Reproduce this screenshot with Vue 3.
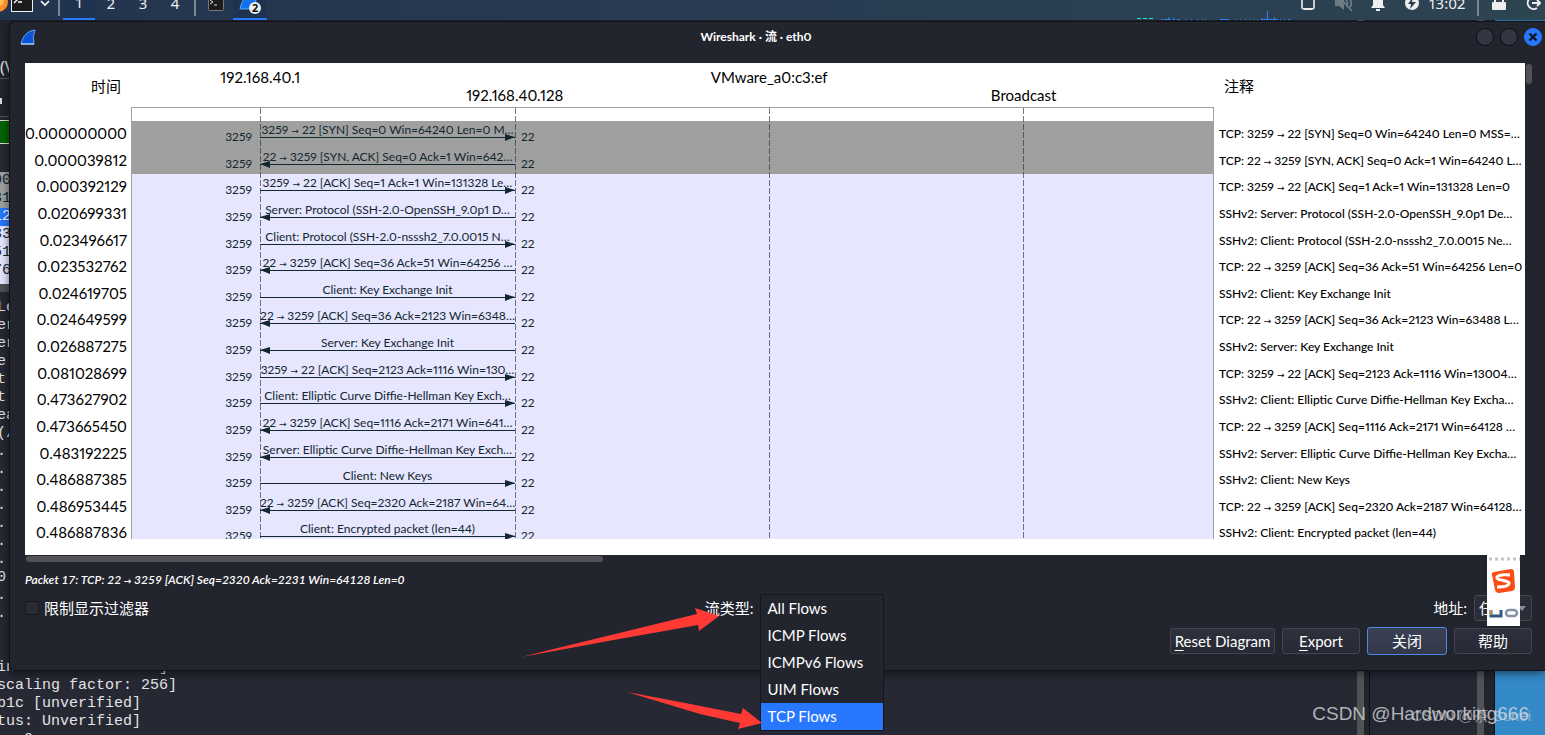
<script setup>
import { ref } from 'vue'

const flowType = ref('TCP Flows')
const flowTypes = ['All Flows', 'ICMP Flows', 'ICMPv6 Flows', 'UIM Flows', 'TCP Flows']
const address = ref('任意')
const limit = ref(false)

const packets = [
  { time: '0.000000000', dir: 'out', label: '3259 → 22 [SYN] Seq=0 Win=64240 Len=0 M…', note: 'TCP: 3259 → 22 [SYN] Seq=0 Win=64240 Len=0 MSS=…', dark: true },
  { time: '0.000039812', dir: 'in', label: '22 → 3259 [SYN, ACK] Seq=0 Ack=1 Win=642…', note: 'TCP: 22 → 3259 [SYN, ACK] Seq=0 Ack=1 Win=64240 L…', dark: true },
  { time: '0.000392129', dir: 'out', label: '3259 → 22 [ACK] Seq=1 Ack=1 Win=131328 Le…', note: 'TCP: 3259 → 22 [ACK] Seq=1 Ack=1 Win=131328 Len=0' },
  { time: '0.020699331', dir: 'in', label: 'Server: Protocol (SSH-2.0-OpenSSH_9.0p1 D…', note: 'SSHv2: Server: Protocol (SSH-2.0-OpenSSH_9.0p1 De…' },
  { time: '0.023496617', dir: 'out', label: 'Client: Protocol (SSH-2.0-nsssh2_7.0.0015 N…', note: 'SSHv2: Client: Protocol (SSH-2.0-nsssh2_7.0.0015 Ne…' },
  { time: '0.023532762', dir: 'in', label: '22 → 3259 [ACK] Seq=36 Ack=51 Win=64256 …', note: 'TCP: 22 → 3259 [ACK] Seq=36 Ack=51 Win=64256 Len=0' },
  { time: '0.024619705', dir: 'out', label: 'Client: Key Exchange Init', note: 'SSHv2: Client: Key Exchange Init' },
  { time: '0.024649599', dir: 'in', label: '22 → 3259 [ACK] Seq=36 Ack=2123 Win=6348…', note: 'TCP: 22 → 3259 [ACK] Seq=36 Ack=2123 Win=63488 L…' },
  { time: '0.026887275', dir: 'in', label: 'Server: Key Exchange Init', note: 'SSHv2: Server: Key Exchange Init' },
  { time: '0.081028699', dir: 'out', label: '3259 → 22 [ACK] Seq=2123 Ack=1116 Win=130…', note: 'TCP: 3259 → 22 [ACK] Seq=2123 Ack=1116 Win=13004…' },
  { time: '0.473627902', dir: 'out', label: 'Client: Elliptic Curve Diffie-Hellman Key Exch…', note: 'SSHv2: Client: Elliptic Curve Diffie-Hellman Key Excha…' },
  { time: '0.473665450', dir: 'in', label: '22 → 3259 [ACK] Seq=1116 Ack=2171 Win=641…', note: 'TCP: 22 → 3259 [ACK] Seq=1116 Ack=2171 Win=64128 …' },
  { time: '0.483192225', dir: 'in', label: 'Server: Elliptic Curve Diffie-Hellman Key Exch…', note: 'SSHv2: Server: Elliptic Curve Diffie-Hellman Key Excha…' },
  { time: '0.486887385', dir: 'out', label: 'Client: New Keys', note: 'SSHv2: Client: New Keys' },
  { time: '0.486953445', dir: 'in', label: '22 → 3259 [ACK] Seq=2320 Ack=2187 Win=64…', note: 'TCP: 22 → 3259 [ACK] Seq=2320 Ack=2187 Win=64128…' },
  { time: '0.486887836', dir: 'out', label: 'Client: Encrypted packet (len=44)', note: 'SSHv2: Client: Encrypted packet (len=44)' }
]

const detailLines = [
  'Le', 'er', 'er', 'e', 't', 't', 'ea', '(/', '.', '.', '.', '.', '.', '.', '.', '0', '.', '.', '', '',
  'in                ]', 'scaling factor: 256]', 'b1c [unverified]', 'tus: Unverified]', '   0'
].join('\n')
</script>

<template>
  <div class="desktop">
    <section class="backdrop" aria-hidden="true">
      <div class="main-window">
        <div class="menu-strip">(V</div>
        <div class="tool-strip"><i></i></div>
        <div class="filter-strip"></div>
        <div class="head-strip"></div>
        <div class="list-row grey">00</div>
        <div class="list-row grey">31</div>
        <div class="list-row chosen">12</div>
        <div class="list-row">33</div>
        <div class="list-row">51</div>
        <div class="list-row">76</div>
        <div class="split"></div>
        <pre class="details">{{ detailLines }}</pre>
      </div>
      <div class="bar"></div>
      <div class="edge"></div>
      <div class="side-window"></div>
      <div class="bar"></div>
      <div class="edge narrow"></div>
      <div class="wallpaper"></div>
    </section>

    <header class="panel">
      <svg class="fox" width="8" height="22" viewBox="0 0 8 22"><circle cx="-2" cy="10" r="10" fill="#ff8a2a" /><circle cx="-3" cy="8" r="7" fill="#ffc14a" /></svg>
      <button class="plain term" aria-label="Terminal">
        <svg width="22" height="22" viewBox="0 0 22 22"><rect x="0.5" y="0.5" width="21" height="20" fill="#1c1c1c" stroke="#eee" /><path d="M3 6l3 3-3 3M7 11h4" fill="none" stroke="#fff" stroke-width="1.4" /></svg>
      </button>
      <svg class="chev" width="10" height="8" viewBox="0 0 10 8"><path d="M1 2l4 4 4-4" fill="none" stroke="#fff" stroke-width="1.6" /></svg>
      <i class="sep"></i>
      <button class="space on">1</button>
      <button class="space">2</button>
      <button class="space">3</button>
      <button class="space">4</button>
      <i class="sep second"></i>
      <button class="plain task" aria-label="Terminal window">
        <svg width="16" height="16" viewBox="0 0 16 16"><rect x="0.5" y="0.5" width="15" height="15" rx="1" fill="#1b1b1b" stroke="#777" /><path d="M2 5l3 2-3 2M6 10h3" fill="none" stroke="#ddd" /></svg>
      </button>
      <button class="plain task on" aria-label="Wireshark windows">
        <svg width="24" height="28" viewBox="0 0 24 28"><path d="M2 21C4 11 9 6 19 3q-3 8 0 18z" fill="#1170f0" stroke="#5aa9ff" /><circle cx="17" cy="20" r="6" fill="#eee" /><text x="17" y="24" text-anchor="middle" font-size="11" font-weight="700" fill="#111">2</text></svg>
      </button>
      <svg class="graph" width="154" height="10" viewBox="0 0 154 10">
        <path d="M0 8.500h4M6 8.500h4M12 8.500h4" stroke="#16e6cf" />
        <path d="M24 9.500h2m1 0h7m2 0h2m2 0h3M48 9.500h1m5 0h1m5 0h1m4 0h1m2 0h1M83 9.500h9M99 9.500h1m3 0h1m4 0h1m3 0h1m3 0h1m3 0h1m3 0h17m2 0h1m3 0h1m3 0h2M31.500 7v3M36.500 8v2M130.500 1v9M124.500 8v2M137.500 7v3" stroke="#2a80f5" />
      </svg>
      <svg class="tray" width="16" height="18" viewBox="0 0 16 18"><rect x="2" y="2" width="12" height="13" rx="2" fill="none" stroke="#eee" stroke-width="1.6" /><path d="M4 15h8" stroke="#eee" stroke-width="2" /></svg>
      <svg class="tray" width="20" height="20" viewBox="0 0 20 20"><path d="M1 7h4l5-4v14l-5-4H1z" fill="#6d7b85" /><path d="M12 7q3 3 0 6M15 5q4 5 1 9M4 3l14 15" fill="none" stroke="#6d7b85" stroke-width="1.8" /></svg>
      <svg class="tray bell" width="16" height="18" viewBox="0 0 16 18"><path d="M8 1c4 0 5 3 5 6v4l2 3H1l2-3V7c0-3 1-6 5-6z" fill="#eee" /><path d="M6 16h4" stroke="#eee" stroke-width="2" /></svg>
      <svg class="tray" width="16" height="16" viewBox="0 0 16 16"><circle cx="8" cy="8" r="7" fill="#eee" /><path d="M9 2L4 9h3l-1 5 6-7H8z" fill="#2b3d4c" /></svg>
      <time class="clock">13:02</time>
      <i class="sep"></i>
      <svg class="lock" width="14" height="18" viewBox="0 0 14 18"><rect x="0" y="8" width="14" height="8" rx="1" fill="#eee" /><path d="M3 9V5q4-5 8 0v4" fill="none" stroke="#eee" stroke-width="2" /></svg>
      <svg class="exit" width="16" height="16" viewBox="0 0 16 16"><path d="M12 3a6 6 0 1 0 0 10M7 8h8M12 5l3 3-3 3" fill="none" stroke="#eee" stroke-width="2" /></svg>
    </header>

    <main class="dialog">
      <div class="titlebar">
        <svg width="16" height="16" viewBox="0 0 16 16"><path d="M1 15C3 7 7 2 15 1q-3 6-1 14z" fill="#0b54d8" stroke="#69a8ee" /><path d="M1 15h13" stroke="#d2e4fa" /></svg>
        <h1>Wireshark · 流 · eth0</h1>
        <div class="controls">
          <button aria-label="Minimize"></button>
          <button aria-label="Maximize"></button>
          <button class="close" aria-label="Close"><svg width="10" height="10" viewBox="0 0 10 10"><path d="M1.500 1.500l7 7M8.500 1.500l-7 7" stroke="#101624" stroke-width="2.4" /></svg></button>
        </div>
      </div>

      <div class="view">
        <div class="plot">
          <div class="times">
            <div class="cap">时间</div>
            <div class="rows"><div v-for="p in packets" :key="p.time">{{ p.time }}</div></div>
          </div>
          <div class="middle">
            <div class="hosts lanes">
              <span class="h1">192.168.40.1</span>
              <span class="h2">192.168.40.128</span>
              <span class="h3">VMware_a0:c3:ef</span>
              <span class="h4">Broadcast</span>
            </div>
            <div class="diagram">
              <div class="rows">
                <div v-for="p in packets" :key="p.time" class="lanes packet" :class="{ dark: p.dark }">
                  <span class="port from">3259</span>
                  <div class="flow" :class="p.dir">
                    <div class="label"><span><template v-for="(part, i) in p.label.split('→')" :key="i"><span v-if="i" class="to">→</span>{{ part }}</template></span></div>
                    <div class="line"></div>
                  </div>
                  <span class="port">22</span>
                </div>
              </div>
              <div class="guides lanes"><i></i><i></i><i></i><i></i><i></i></div>
            </div>
          </div>
          <div class="notes">
            <div class="cap">注释</div>
            <div class="rows">
              <div v-for="p in packets" :key="p.time"><template v-for="(part, i) in p.note.split('→')" :key="i"><span v-if="i" class="to">→</span>{{ part }}</template></div>
            </div>
          </div>
        </div>
        <div class="vscroll"></div>
      </div>
      <div class="hscroll"></div>

      <p class="status">Packet 17: TCP: 22 <span class="to">→</span> 3259 [ACK] Seq=2320 Ack=2231 Win=64128 Len=0</p>

      <div class="options">
        <label class="check"><input v-model="limit" type="checkbox" /><span>限制显示过滤器</span></label>
        <div class="type">
          <label for="flow-type">流类型:</label>
          <div class="slot">
            <select id="flow-type" v-model="flowType" size="5">
              <option v-for="t in flowTypes" :key="t" :value="t">{{ t }}</option>
            </select>
          </div>
          <svg class="arrows" width="246" height="124" viewBox="520 608 246 124">
            <path d="M521 657L697 614 695 608 719 616 699 631 698 625 608 641Q560 650 521 657z" fill="#ff3a35" />
            <path d="M627 692L680 702 741 714 743 708 762 723 738 729 740 723 700 714Q660 702 627 692z" fill="#ff3a35" />
          </svg>
        </div>
        <div class="addr">
          <label for="address">地址:</label>
          <div class="combo">
            <select id="address" v-model="address"><option>任意</option></select>
            <svg class="tri" width="8" height="5" viewBox="0 0 8 5"><path d="M0 0h8L4 5z" fill="#8c8f96" /></svg>
          </div>
          <div class="ime">
            <svg width="33" height="71" viewBox="0 0 33 71">
              <path d="M2 4h31" stroke="#c4c4c4" stroke-width="3" stroke-dasharray="3 3" />
              <path d="M7 17l17-3q3 0 3 3l1 15q0 3-3 4l-13 2q-3 0-4-3L5 20q-1-2 2-3z" fill="#fb4e14" />
              <path d="M23 20q-11-1-13 2c-1 4 12 3 12 6 0 4-8 4-12 4" fill="none" stroke="#fff" stroke-width="3" />
              <path d="M4 55v6h10v-6" fill="none" stroke="#345a85" stroke-width="3" /><path d="M4 55v5" stroke="#c78746" stroke-width="2" />
              <rect x="19" y="55" width="11" height="6" rx="3" fill="none" stroke="#8493a6" stroke-width="2.500" />
            </svg>
          </div>
        </div>
      </div>

      <div class="buttons">
        <button class="reset"><span><u>R</u>eset Diagram</span></button>
        <button><span><u>E</u>xport</span></button>
        <button class="default">关闭</button>
        <button>帮助</button>
      </div>
    </main>

    <div class="mark big">CSDN @Hardworking666</div>
    <div class="mark small">CSDN @茶 Sunei</div>
  </div>
</template>

<style>
body { margin: 0; background: #262833; }
</style>

<style scoped>
* { box-sizing: border-box; }
.desktop {
  position: relative; min-height: 100vh; overflow: hidden; background: #262833;
  font-family: Lato, "Noto Sans CJK SC", sans-serif; font-size: 15px; color: #fff;
  font-variant-numeric: proportional-nums;
}
button, select, input { font: inherit; color: inherit; margin: 0; padding: 0; }

.backdrop { position: absolute; inset: 20px 0 0; display: flex; background: #262833; overflow: hidden; }
.main-window { flex: 1; min-width: 0; overflow: hidden; color: #e3e3e3; background: #262833; font: 15px/18px "Liberation Mono", monospace; }
.menu-strip { height: 59px; padding-top: 38px; border-bottom: 1px solid #55575f; font: 16px/18px "Noto Sans", sans-serif; background: #23252e; }
.tool-strip { height: 38px; padding-top: 19px; border-bottom: 1px solid #55575f; background: #23252e; }
.tool-strip i { display: block; width: 2px; height: 6px; background: #ddd; }
.filter-strip { height: 24px; margin-top: 3px; background: #006400; border: solid #ddd; border-width: 1px 0; }
.head-strip { height: 28px; background: #262b35; }
.list-row { height: 18px; text-indent: -7px; background: #e6e6ff; color: #12272e; width: 10px; }
.list-row.grey { background: #a0a0a0; }
.list-row.chosen { background: #2777ff; color: #fff; }
.split { height: 12px; background: #4e5055; border: solid #e6e6ff; border-width: 4px 0 0; }
.details { margin: 0 0 0 -3px; padding-top: 7px; font: inherit; }
.bar { width: 7px; background: #505256; }
.edge { width: 6px; background: #23252d; border-right: 1px solid #0f1014; }
.edge.narrow { width: 11px; }
.side-window { width: 107px; background: #242833; }
.wallpaper { width: 50px; background: #3389c6; }

.panel {
  position: relative; z-index: 2; display: flex; align-items: center; height: 34px; margin-top: -14px;
  background: linear-gradient(90deg, #23344e, #283b52 45%, #2d4451); font-family: "Noto Sans", sans-serif; font-size: 15px; color: #eee;
}
.panel svg { flex: none; }
.plain { display: grid; place-items: center; border: 0; background: none; }
.term { width: 22px; margin-left: 3px; margin-bottom: 3px; }
.chev { margin-left: 7px; }
.sep { width: 2px; height: 26px; margin: 0 3px 0 8px; background: #7e858f; }
.sep.second { margin: 0 3px 0 3px; }
.space { width: 32px; height: 34px; border: 0; background: none; }
.space.on, .task.on { background: #1d3350; border-bottom: 2px solid #2777ff; }
.task { width: 34px; height: 34px; }
.graph { margin: 24px 0 0 auto; }
.tray { margin-left: 9px; }
.tray + .tray { margin-left: 18px; }
.tray + .bell { margin-left: 16px; }
.clock { width: 38px; margin-left: 9px; }
.clock + .sep { margin: 0 13px 0 10px; }
.exit { margin: 0 4px 0 19px; }

.dialog {
  position: relative; z-index: 1; display: flex; flex-direction: column; margin: 1px 0 0 9px; padding: 0 13px 15px 15px;
  background: #23252e; border: solid #111319; border-width: 1px 0 1px 1px; border-radius: 6px 0 0 6px; box-shadow: 0 2px 10px #0008;
}
.titlebar { display: flex; align-items: center; height: 30px; margin: 0 -10px 11px -5px; }
h1 { flex: 1; margin: 0; text-align: center; font-size: 12px; line-height: 18px; font-weight: 700; }
.controls { display: flex; gap: 6px; }
.controls button { display: grid; place-items: center; width: 18px; height: 18px; border: 1px solid #0e0f13; border-radius: 50%; background: #343743; }
.controls .close { background: #2777ff; border-color: #2777ff; }

.view { display: flex; gap: 1px; }
.plot { flex: 1; min-width: 0; display: grid; grid-template-columns: 106px 1fr 311px; background: #fff; color: #000; padding-bottom: 9px; }
.vscroll { width: 6px; height: 20px; margin-top: 1px; border-radius: 3px; background: #505256; }
.hscroll { width: 577px; max-width: 40%; height: 6px; margin: 1px 0 0 1px; border-radius: 3px; background: #505256; }
.cap { height: 57px; padding-top: 13px; font-size: 15px; line-height: 21px; }
.rows { display: grid; grid-template-rows: repeat(16, minmax(0, 1fr)); height: 426px; }
.times { text-align: right; padding-right: 5px; }
.times .cap { padding-right: 5px; }
.times .rows { font-size: 15px; line-height: 27px; }
.notes { padding-left: 5px; white-space: nowrap; overflow: hidden; }
.notes .cap { padding-left: 5px; }
.notes .rows { font-size: 12px; line-height: 27px; font-weight: 500; }
.to { font-family: "DejaVu Sans", sans-serif; font-size: 9px; line-height: 1; }

.lanes { display: grid; grid-template-columns: 128fr 255fr 254fr 254fr 190fr; }
.hosts { height: 44px; grid-template-columns: 2fr 254fr 254fr 254fr 254fr 63fr; grid-template-rows: 18px 18px; padding-top: 5px; line-height: 18px; text-align: center; }
.h1 { grid-area: 1 / 2; }
.h2 { grid-area: 2 / 3; }
.h3 { grid-area: 1 / 4; }
.h4 { grid-area: 2 / 5; }
.diagram { position: relative; height: 432px; padding-top: 13px; border: solid #a0a0a0; border-width: 1px 1px 0; overflow: hidden; }
.packet { background: #e6e6ff; color: #12272e; font-size: 12px; line-height: 18px; }
.packet.dark { background: #a0a0a0; }
.port { padding: 7px 0 0 6px; height: 25px; }
.port.from { padding: 7px 8px 0 0; text-align: right; }
.flow { min-width: 0; white-space: nowrap; }
.label { display: flex; justify-content: center; height: 16px; line-height: 17px; }
.line { position: relative; height: 1px; background: #12272e; }
.line::after { content: ""; position: absolute; top: -3px; right: 0; border: solid transparent; border-width: 3px 0 4px 10px; border-left-color: #12272e; }
.in .line::after { right: auto; left: 0; border-width: 3px 10px 4px 0; border-left-color: transparent; border-right-color: #12272e; }
.guides { position: absolute; inset: 0; }
.guides i + i { width: 1px; background: repeating-linear-gradient(#12272e99 0 6px, transparent 6px 8px); }

.status { margin: 9px 0 6px; font-size: 12px; line-height: 18px; font-style: italic; font-weight: 600; font-variant-numeric: normal; }
.options { display: flex; justify-content: space-between; align-items: center; height: 26px; line-height: 20px; }
.check { display: flex; align-items: center; gap: 5px; }
.check input { appearance: none; width: 14px; height: 14px; border: 1px solid #181a20; background: #282b36; }
.type { position: relative; display: flex; align-items: center; gap: 6px; margin-left: 6px; }
.slot { width: 124px; height: 26px; }
.slot select { position: absolute; z-index: 2; top: -1px; right: 0; width: 124px; height: 137px; padding: 0; overflow: hidden; border: 1px solid #16171d; border-radius: 0; background: #23252e; outline: 0; }
option { min-height: 27px; padding: 4px 7px; line-height: 19px; }
.slot option:checked { color: #fff; background: #2777ff linear-gradient(#2777ff, #2777ff); }
.arrows { position: absolute; z-index: 3; right: 118px; top: 13px; }
.addr { position: relative; display: flex; align-items: center; gap: 7px; }
.combo { position: relative; }
.combo select { appearance: none; width: 58px; height: 26px; padding-left: 4px; border: 1px solid #45474f; border-radius: 3px; background: #2a2c37; }
.tri { position: absolute; right: 6px; top: 11px; }
.ime { position: absolute; right: 12px; top: -40px; width: 33px; height: 71px; background: #fff; }
.buttons { display: flex; justify-content: flex-end; align-items: center; gap: 7px; margin-top: 6px; line-height: 20px; }
.buttons button { width: 78px; height: 26px; border: 1px solid #434650; border-radius: 3px; background: linear-gradient(#2e313c, #272a34); white-space: nowrap; }
.buttons .reset { width: 105px; }
.buttons .default { width: 80px; height: 28px; border-color: #4f86e8; background: linear-gradient(#3b4154, #32374a); }
u { text-underline-offset: 3px; }

.mark { position: absolute; z-index: 4; color: #d8d8dccc; font-family: "Liberation Sans", "Noto Sans CJK SC", sans-serif; white-space: nowrap; }
.mark.big { right: 16px; bottom: 9px; font-size: 19px; line-height: 24px; }
.mark.small { right: 14px; bottom: 9px; font-size: 15px; line-height: 20px; color: #d8d8dc88; }
</style>
